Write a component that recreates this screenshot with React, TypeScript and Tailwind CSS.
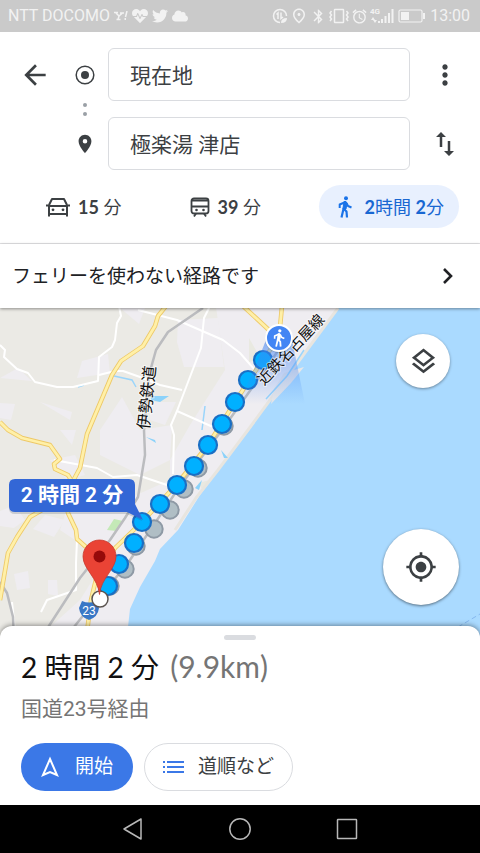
import { useState } from "react";
import { FaCloud, FaHeartbeat, FaTwitter } from "react-icons/fa";
import {
  MdAlarm, MdArrowBack, MdBluetooth, MdMoreVert,
  MdMyLocation, MdOutlineLayers, MdOutlinePlace, MdPlace,
} from "react-icons/md";

const routeDots = [
  [263, 360], [248, 380], [235, 402], [222, 424], [208, 445], [194, 466], [177, 485],
  [160, 504], [142, 522], [134, 543], [119, 564], [108, 586],
];

const altDots = [[224, 426], [198, 468], [184, 489], [170, 510], [154, 529], [136, 546], [125, 569], [110, 586]];

const yellowRoads = [
  "M166 306L158 316L155 326L143 346L121 361L112 375L87 434L80 468L73 481L66 500",
  "M0 422L8 430L22 438L50 445L60 459L54 464L55 469L68 475L73 483",
  "M42 510L30 517L17 537L8 553L0 600",
  "M66 500L68 513L76 530L77 539L86 547",
  "M282 306L279 338L262 361L235 402L208 445L177 484L142 522L115 548L97 575L91 600L86 640",
  "M243 306L270 331",
];

const whiteRoads = [
  "M0 345L5 350L4 357L17 369L28 373L35 382L57 387L73 387L98 381L99 357L112 347L115 340L117 323L121 316L119 306",
  "M99 375L115 371L123 371L140 377L160 385L182 390",
  "M138 310L177 320L223 340L240 353L262 378",
  "M210 306L204 318L201 348L177 411L171 425L174 435L173 474",
  "M177 411L213 427",
  "M54 460L97 468L113 477L137 475L167 485L180 482",
  "M77 540L76 563L76 590L47 600L41 612",
  "M12 602L16 640",
];

const rails = [
  "M203 308L168 332L156 350L149 375L144 430L145 455L138 497L125 518L110 540L80 578L45 632",
  "M0 582L7 593L13 617L14 640",
  "M282 345L262 374L222 430L180 486L130 560L98 600L86 612L70 632",
];

function WalkShape() {
  return (
    <g fill="none" stroke="currentColor" strokeWidth="2" strokeLinejoin="round">
      <circle cx="8" cy="2.200" r="2" fill="currentColor" stroke="none" />
      <path d="M6 5.500H8L9 7.500L8 13L6 13.500L5 12.500Z" fill="currentColor" strokeWidth="1" />
      <path d="M6.500 6.500L1.700 8.500V12M8.500 7L10 10L13.500 11.500" />
      <path d="M5.700 12L3.500 21.500M6 13L8.500 15.500L9 21.500" strokeWidth="2.200" />
    </g>
  );
}

function CarIcon() {
  return (
    <svg viewBox="0 0 24 20" className="h-5 w-6" fill="none" stroke="currentColor" strokeWidth="2" aria-hidden="true">
      <path d="M3 8L6 2H18L21 8M3 8V19.500M21 8V19.500M3 9H21M3 17H21" strokeLinejoin="round" />
      <path d="M0 8.500H4M20 8.500H24" />
      <circle cx="7" cy="12.800" r="1.400" fill="currentColor" stroke="none" />
      <circle cx="17" cy="12.800" r="1.400" fill="currentColor" stroke="none" />
    </svg>
  );
}

function TransitIcon() {
  return (
    <svg viewBox="0 0 20 20" className="size-5" fill="none" stroke="currentColor" strokeWidth="1.800" aria-hidden="true">
      <rect x="1.500" y="1.500" width="17" height="15" rx="2.500" />
      <path d="M2 3.500H18M2 9.500H18" />
      <path d="M6 16.500L4 19.500M14 16.500L16 19.500" />
      <circle cx="6.500" cy="13" r="1.300" fill="currentColor" stroke="none" />
      <circle cx="13.500" cy="13" r="1.300" fill="currentColor" stroke="none" />
    </svg>
  );
}

function StatusBar() {
  return (
    <div className="flex h-8 items-center justify-between bg-[#cacaca] pr-2.5 pl-2 text-[#f2f2f2]">
      <div className="flex items-center gap-1">
        <span className="text-base">NTT DOCOMO</span>
        <svg viewBox="0 0 14 10" className="h-2.5 w-3.5" fill="none" stroke="currentColor" strokeWidth="1.500" aria-hidden="true">
          <path d="M0 1.500H4M6 2H10M2 2L5 5L8.500 2M5 5L4 8.500M2.500 8.500H6.500M13 0L11.500 6" />
          <path d="M10.500 8H12" strokeWidth="2" />
        </svg>
        <FaHeartbeat size={16} />
        <FaTwitter size={16} />
        <FaCloud size={16} />
      </div>
      <div className="flex items-center gap-0.5">
        <svg viewBox="0 0 16 16" className="size-4" fill="none" stroke="currentColor" strokeWidth="1.500" aria-hidden="true">
          <path d="M14.500 8A6.500 6.500 0 1 0 8 14.500M4.500 6.500L6 5V11M9 4.500V10.500L11 9" />
          <path d="M9 15Q9 10 15 10Q15 15 9 15Z" fill="currentColor" stroke="none" />
        </svg>
        <MdOutlinePlace size={18} />
        <MdBluetooth size={17} />
        <svg viewBox="0 0 20 16" className="h-4 w-5" fill="none" stroke="currentColor" strokeWidth="1.500" aria-hidden="true">
          <rect x="5.500" y="1.500" width="9" height="13" rx="0.500" />
          <path d="M2.500 3L1 5L2.500 7L1 9L2.500 11L1 13M17.500 3L19 5L17.500 7L19 9L17.500 11L19 13" />
        </svg>
        <MdAlarm size={17} />
        <svg viewBox="0 0 24 16" className="h-4 w-6" fill="currentColor" aria-hidden="true">
          <text x="0" y="6" fontSize="8" fontWeight="700" fontFamily="Roboto, sans-serif">4G</text>
          <path d="M3 9L5 12H1ZM5 15L3 12H7ZM8 13H10V15H8ZM11 11H13V15H11ZM14.500 8H16.500V15H14.500ZM18 5H20V15H18ZM21.500 1H23.500V15H21.500Z" />
        </svg>
        <svg viewBox="0 0 28 14" className="mx-0.5 h-3.5 w-7" aria-hidden="true">
          <rect x="1" y="1" width="23" height="12" rx="1.500" fill="none" stroke="currentColor" strokeWidth="1.200" />
          <path d="M3 3H11V11H3ZM25 4H27V10H25Z" fill="currentColor" />
        </svg>
        <span className="text-base">13:00</span>
      </div>
    </div>
  );
}

function MapCanvas() {
  return (
    <svg viewBox="0 308 480 334" preserveAspectRatio="xMidYMid slice" className="absolute inset-0 size-full" role="img" aria-label="地図">
      <defs>
        <linearGradient id="beam" x1="0" y1="0" x2="0" y2="1">
          <stop offset="0" stopColor="#4285f4" stopOpacity="0.6" />
          <stop offset="1" stopColor="#4285f4" stopOpacity="0" />
        </linearGradient>
      </defs>
      <rect y="300" width="480" height="350" fill="#ebeae5" />
      <g fill="#efedf1">
        <path d="M215 300H345L125 645H30L80 600L105 560L60 530L70 500L110 490L125 500L170 480L170 460L190 425L225 370Z" />
        <path d="M82 361L108 354L110 373L77 378ZM178 320L218 318L224 367L184 367L177 342ZM120 308L145 308L139 324ZM0 378L18 368L32 381ZM100 430L122 397L140 430L172 425L170 460L140 475L100 455ZM40 402L72 412L70 420ZM0 403L15 404L11 420L0 418ZM150 402L176 402L165 425L150 420Z" />
        <path d="M0 511L15 505L25 520L14 528L0 526ZM45 515L65 520L54 537L33 529ZM14 574L28 571L30 588L17 590ZM48 580L57 580L58 596L48 594ZM60 430L76 430L72 445ZM100 442L115 431L123 433L121 454L100 454ZM50 460L75 455L85 475L67 480Z" />
      </g>
      <path d="M249 338L261 359L249 362ZM262 410L285 385L291 386L253 430ZM198 483L210 480L204 492Z" fill="#e9e9e1" />
      <path d="M339 306L292 369L250 429L240 442L200 495L178 530L160 549L155 561L140 587L130 609L126 645H480V300Z" fill="#aadaff" />
      <path d="M338 308L284 381L248 430L218 470L196 498L175 530" fill="none" stroke="#e8e5df" strokeWidth="3" />
      <path d="M284 373L304 367L291 383L271 404L274 389Z" fill="#e9e7e7" />
      <g fill="none" stroke="#9ad5fb" strokeWidth="1.500">
        <path d="M266 399L287 376L304 350M114 376L132 380L136 387M78 387L84 385M205 406L202 430" />
      </g>
      <path d="M151 396L169 396L160 402L151 400ZM146 437L155 440L156 443ZM221 450L228 458L224 458ZM195 488L202 480L199 490Z" fill="#8bd2fa" />
      <path d="M114 519L123 521L117 531L107 530Z" fill="#c4e9b7" />
      <path d="M458 627L480 614" stroke="#86b8ef" strokeDasharray="5 3" />

      <g fill="none" stroke="#fff" strokeWidth="2" strokeLinejoin="round">
        {whiteRoads.map((d) => <path key={d} d={d} />)}
      </g>
      <g fill="none" stroke="#bbbcbf" strokeWidth="2.500" strokeLinejoin="round">
        {rails.map((d) => <path key={d} d={d} />)}
      </g>
      <g fill="none" stroke="#eec967" strokeWidth="4.500" strokeLinejoin="round">
        {yellowRoads.map((d) => <path key={d} d={d} />)}
      </g>
      <g fill="none" stroke="#fff0a8" strokeWidth="2.800" strokeLinejoin="round">
        {yellowRoads.map((d) => <path key={d} d={d} />)}
      </g>

      <g fill="#b0bec5" stroke="#8e99a5" strokeWidth="2">
        {altDots.map(([x, y]) => <circle key={x} cx={x} cy={y} r="8.700" />)}
      </g>
      <g fill="#00b0ff" stroke="#1a6fc4" strokeWidth="2.200">
        {routeDots.map(([x, y]) => <circle key={x} cx={x} cy={y} r="9" />)}
      </g>

      <path d="M266 340L292 340L305 404L238 404L256 365Z" fill="url(#beam)" />
      <g fontFamily="'Noto Sans CJK JP', sans-serif" fill="#111" stroke="#fff" strokeWidth="2" strokeOpacity="0.6" paintOrder="stroke">
        <text transform="translate(149 430) rotate(-84)" fontSize="16">伊勢鉄道</text>
        <text transform="translate(264 386) rotate(-47)" fontSize="15">近鉄名古屋線</text>
      </g>

      <circle cx="279" cy="339" r="14" fill="#345" opacity="0.2" />
      <circle cx="279" cy="338" r="13" fill="#4285f4" stroke="#fff" strokeWidth="2" />
      <svg x="273" y="329" width="12" height="18" viewBox="0 0 14 22" color="#fff">
        <WalkShape />
      </svg>

      <path d="M82 601Q89 604 96 601L99 608Q98 617 89 620Q80 617 79 608Z" fill="#3877c6" />
      <text x="89" y="615" textAnchor="middle" fontFamily="Roboto, sans-serif" fontSize="12" fill="#fff">23</text>
      <circle cx="100" cy="599" r="8" fill="#fff" stroke="#5b5450" strokeWidth="1.500" />
      <path d="M99.500 594.500C98 578 83 569 83 556.500A16.500 16.500 0 0 1 116 556.500C116 569 101 578 99.500 594.500Z" fill="#ea4335" stroke="#c8382c" strokeWidth="0.800" />
      <circle cx="99.500" cy="556.500" r="6" fill="#960a0a" />

      <path d="M15 481H129Q135 481 135 487V506L142 521L127 514H15Q9 514 9 508V487Q9 481 15 481Z" fill="#345" opacity="0.2" />
      <path d="M15 479H129Q135 479 135 485V504L143 520L127 512H15Q9 512 9 506V485Q9 479 15 479Z" fill="#3367d6" />
      <text x="72" y="502" textAnchor="middle" fontFamily="Roboto, 'Noto Sans CJK JP', sans-serif" fontSize="21" fontWeight="600" fill="#fff">2 時間 2 分</text>
    </svg>
  );
}

export default function App() {
  const [mode, setMode] = useState("walk");

  const modes = [
    { id: "car", label: <><b>15</b> 分</>, icon: <CarIcon /> },
    { id: "transit", label: <><b>39</b> 分</>, icon: <TransitIcon /> },
    {
      id: "walk",
      label: <><b>2</b>時間 <b>2</b>分</>,
      icon: (
        <svg viewBox="0 0 14 22" className="mx-1 h-[22px] w-3.5 text-[#1a73e8]" aria-hidden="true">
          <WalkShape />
        </svg>
      ),
    },
  ];

  return (
    <div className="flex min-h-screen flex-col bg-white font-[Roboto,'Noto_Sans_CJK_JP',sans-serif] text-[#3c4043]">
      <StatusBar />

      <header className="border-b border-[#e4e4e6] pt-4 pb-[15px]">
        <div className="grid grid-cols-[70px_30px_1fr_70px] gap-y-4">
          <button aria-label="戻る" className="flex items-center justify-center">
            <MdArrowBack size={32} />
          </button>
          <div className="row-span-2 flex flex-col items-center justify-between pt-[17px] pb-[15px]">
            <svg viewBox="0 0 20 20" className="size-5" aria-hidden="true">
              <circle cx="10" cy="10" r="8.800" fill="none" stroke="currentColor" strokeWidth="1.500" />
              <circle cx="10" cy="10" r="4" fill="currentColor" />
            </svg>
            <div className="flex flex-col gap-[5px]">
              <span className="size-1 rounded-full bg-[#9aa0a6]" />
              <span className="size-1 rounded-full bg-[#9aa0a6]" />
            </div>
            <MdPlace size={22} />
          </div>
          <input
            aria-label="出発地"
            defaultValue="現在地"
            className="ml-2 h-[53px] min-w-0 rounded-md border border-[#dadce0] px-[21px] pb-0.5 text-[21px] outline-none"
          />
          <button aria-label="メニュー" className="flex items-center justify-center">
            <MdMoreVert size={32} />
          </button>
          <span />
          <input
            aria-label="目的地"
            defaultValue="極楽湯 津店"
            className="ml-2 h-[53px] min-w-0 rounded-md border border-[#dadce0] px-[21px] pb-0.5 text-[21px] outline-none"
          />
          <button aria-label="入れ替え" className="flex items-center justify-center">
            <svg viewBox="0 0 20 24" className="h-6 w-5" fill="none" stroke="currentColor" strokeWidth="2.500" aria-hidden="true">
              <path d="M6 15V4M14 9V20" />
              <path d="M6 0L11 5H1ZM14 24L19 19H9Z" fill="currentColor" stroke="none" />
            </svg>
          </button>
        </div>

        <nav className="mt-[15px] flex items-center gap-9 pr-[21px] pl-[30px] font-[Lato,'Noto_Sans_CJK_JP',sans-serif] text-lg">
          {modes.map((m) => (
            <button
              key={m.id}
              onClick={() => setMode(m.id)}
              className={`flex h-[43px] items-center gap-2 rounded-full whitespace-nowrap last:ml-auto ${
                mode === m.id ? "bg-[#e8f0fe] px-[15px] text-[#1967d2]" : "px-4"
              }`}
            >
              {m.icon}
              <span>{m.label}</span>
            </button>
          ))}
        </nav>
      </header>

      <button className="relative z-10 flex h-16 items-center justify-between bg-white pr-[27px] pl-3 text-left text-[19px] text-[#202124] shadow-[0_1px_3px_rgba(0,0,0,0.4)]">
        <span className="pt-0.5">フェリーを使わない経路です</span>
        <svg viewBox="0 0 10 16" className="h-4 w-2.5" fill="none" stroke="currentColor" strokeWidth="2.600" aria-hidden="true">
          <path d="M1 1L8 8L1 15" />
        </svg>
      </button>

      <main className="relative min-h-[333px] flex-1 overflow-hidden">
        <MapCanvas />
        <button aria-label="レイヤ" className="absolute top-[26px] right-[30px] flex size-[54px] items-center justify-center rounded-full bg-white shadow-[0_1px_3px_rgba(0,0,0,0.4)]">
          <MdOutlineLayers size={31} />
        </button>
        <button aria-label="現在地を表示" className="absolute right-[21px] bottom-[37px] flex size-[76px] items-center justify-center rounded-full bg-white shadow-[0_1px_3px_rgba(0,0,0,0.5)]">
          <MdMyLocation size={32} />
        </button>
      </main>

      <section className="relative -mt-4 rounded-t-xl bg-white px-[21px] pt-[9px] pb-3.5 shadow-[0_-1px_5px_rgba(0,0,0,0.4)]">
        <div className="mx-auto h-[5px] w-8 rounded-full bg-[#dadce0]" />
        <h1 className="mt-[7px] font-[Lato,'Noto_Sans_CJK_JP',sans-serif] text-[28px] leading-10 text-[#111]">
          2 時間 2 分 <span className="ml-1 text-[30px] leading-none text-[#757575]">(9.9km)</span>
        </h1>
        <p className="mt-1.5 text-[21px] leading-8 text-[#757575]">国道23号経由</p>
        <div className="mt-[18px] flex gap-[11px] text-[19px]">
          <button className="flex h-12 w-28 items-center justify-center gap-4 rounded-full bg-[#3b78e7] text-white">
            <svg viewBox="0 0 18 22" className="h-[22px] w-[18px]" fill="none" stroke="currentColor" strokeWidth="2" aria-hidden="true">
              <path d="M9 3L16 19L9 16L2 19Z" />
            </svg>
            開始
          </button>
          <button className="flex h-12 items-center gap-[13px] rounded-full border border-[#dadce0] px-[18px]">
            <svg viewBox="0 0 22 14" className="h-3.5 w-[22px] text-[#3b78e7]" fill="currentColor" aria-hidden="true">
              <path d="M0 1H2V3H0ZM0 6H2V8H0ZM0 11H2V13H0ZM4 1H21V3H4ZM4 6H21V8H4ZM4 11H21V13H4Z" />
            </svg>
            道順など
          </button>
        </div>
      </section>

      <footer className="flex h-12 items-center justify-center gap-[83px] bg-black text-[#b8b8b8]">
        <button aria-label="戻る">
          <svg viewBox="0 0 24 24" className="size-6" fill="none" stroke="currentColor" strokeWidth="1.500">
            <path d="M20 2V22L3 12Z" strokeLinejoin="round" />
          </svg>
        </button>
        <button aria-label="ホーム">
          <svg viewBox="0 0 24 24" className="size-6" fill="none" stroke="currentColor" strokeWidth="1.500">
            <circle cx="12" cy="12" r="10.200" />
          </svg>
        </button>
        <button aria-label="アプリ履歴">
          <svg viewBox="0 0 24 24" className="size-6" fill="none" stroke="currentColor" strokeWidth="1.500">
            <rect x="2.500" y="2.500" width="19" height="19" rx="0.500" />
          </svg>
        </button>
      </footer>
    </div>
  );
}
